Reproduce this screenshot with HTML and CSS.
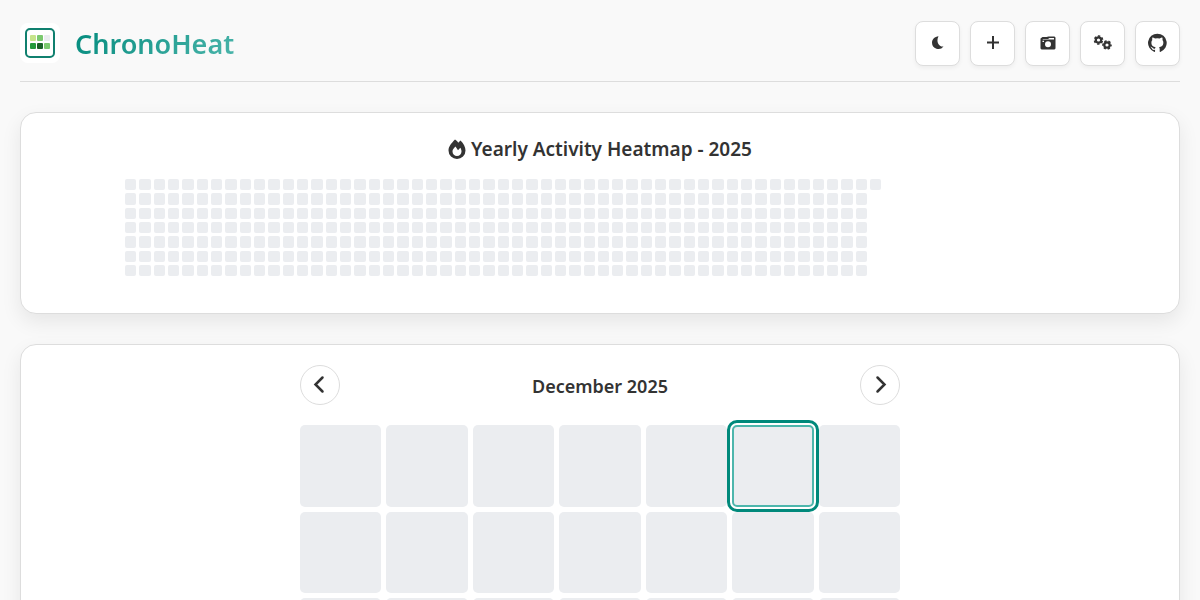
FILE: index.html
```html
<!DOCTYPE html>
<html lang="en">
<head>
  <meta charset="UTF-8">
  <meta name="viewport" content="width=device-width, initial-scale=1.0">
  <title>ChronoHeat</title>
  <link rel="stylesheet" href="styles.css">
</head>
<body>
  <header class="header">
    <div class="brand">
      <svg class="logo" viewBox="0 0 40 40" aria-hidden="true">
        <rect width="40" height="40" rx="8" fill="#fff"/>
        <rect x="6" y="6" width="28" height="28" rx="4" fill="#fff" stroke="#10806f" stroke-width="2"/>
        <rect x="10" y="12" width="6" height="6" rx="1" fill="#c6e48b"/>
        <rect x="17" y="12" width="6" height="6" rx="1" fill="#7bc96f"/>
        <rect x="24" y="12" width="6" height="6" rx="1" fill="#ebedf0"/>
        <rect x="10" y="20" width="6" height="6" rx="1" fill="#239a3b"/>
        <rect x="17" y="20" width="6" height="6" rx="1" fill="#196127"/>
        <rect x="24" y="20" width="6" height="6" rx="1" fill="#7bc96f"/>
      </svg>
      <h1 class="brand-name">ChronoHeat</h1>
    </div>
    <nav class="controls">
      <button class="icon-btn" type="button" aria-label="Toggle theme">
        <svg viewBox="0 0 20 20"><path d="M10.500 3.200C6.800 3.500 4 6.200 4 9.800a6.400 6.400 0 0 0 11.500 3.700C11.500 14.300 7.500 9 10.500 3.200z"/></svg>
      </button>
      <button class="icon-btn" type="button" aria-label="Add activity">
        <svg viewBox="0 0 20 20"><path d="M9 3h2v5.500h5v2h-5V16H9v-5.500H4v-2h5z"/></svg>
      </button>
      <button class="icon-btn" type="button" aria-label="Save snapshot">
        <svg viewBox="0 0 20 20"><path fill-rule="evenodd" d="M2.500 5.500L4.500 4h4L10.500 3.500h6L17.500 4.500v11l-1 1h-13l-1-1zM4.500 6.500h11.500V5h-4.500L10 6H5zM10 8.200a3 3 0 1 0 0 6a3 3 0 0 0 0-6zM4.500 7.800v1.200H6V7.800z"/></svg>
      </button>
      <button class="icon-btn" type="button" aria-label="Settings">
        <svg viewBox="0 0 20 20">
          <g fill="none" stroke="currentColor">
            <circle cx="5.500" cy="7" r="2.700" stroke-width="2.200"/>
            <circle cx="5.500" cy="7" r="4" stroke-width="1.600" stroke-dasharray="2.300 1.889" stroke-dashoffset="-1"/>
            <circle cx="14" cy="12" r="2.700" stroke-width="2.200"/>
            <circle cx="14" cy="12" r="4" stroke-width="1.600" stroke-dasharray="2.300 1.889" stroke-dashoffset="1.100"/>
          </g>
        </svg>
      </button>
      <a class="icon-btn" href="#" aria-label="GitHub">
        <svg viewBox="0 0 16 16"><path d="M7.500.5a7.500 7.500 0 0 0-2.370 14.610c.37.07.51-.16.510-.360v-1.270c-2.090.45-2.530-1.010-2.530-1.010-.34-.87-.83-1.100-.83-1.100-.68-.46.05-.45.05-.45.75.05 1.150.77 1.150.77.67 1.150 1.750.82 2.180.62.07-.48.26-.81.47-1-1.670-.19-3.420-.83-3.420-3.700 0-.82.29-1.490.77-2.010-.08-.19-.33-.95.07-1.980 0 0 .63-.2 2.060.77a7.100 7.100 0 0 1 3.760 0c1.430-.97 2.060-.77 2.060-.77.4 1.030.15 1.790.07 1.980.48.52.77 1.190.77 2.010 0 2.880-1.750 3.510-3.430 3.700.27.23.51.69.51 1.390v2.050c0 .2.130.43.510.360A7.500 7.500 0 0 0 7.500.5z"/></svg>
      </a>
    </nav>
  </header>

  <main>
    <section class="card">
      <h2 class="card-title">
        <svg class="flame" viewBox="0 0 18 20" aria-hidden="true"><path fill-rule="evenodd" d="M7 0.500C8.500 1.500 9.500 2.500 10.200 3.700L12.500 1.500C15.500 4.500 17.500 8 17.500 11.500a8.500 8.500 0 0 1-17 0C.5 7.500 3.500 4 7 .5zM7.500 7.500C5.700 9.200 4.500 10.500 4.500 12.500a4.500 4.500 0 0 0 9 0c0-1.500-.5-2.700-1.200-3.700L10 11.200z"/></svg>
        Yearly Activity Heatmap - 2025
      </h2>
      <div class="heatmap-wrap">
        <div class="heatmap" id="heatmap"></div>
      </div>
    </section>

    <section class="card">
      <div class="calendar">
        <div class="calendar-header">
          <button class="nav-btn" type="button" aria-label="Previous month">
            <svg viewBox="0 0 20 20"><path d="M12.500 2.500L5.500 9.500l7 7"/></svg>
          </button>
          <h2 class="month">December 2025</h2>
          <button class="nav-btn" type="button" aria-label="Next month">
            <svg viewBox="0 0 20 20"><path d="M7.500 2.500l7 7-7 7"/></svg>
          </button>
        </div>
        <div class="days" id="days"></div>
      </div>
    </section>
  </main>

<script>
  const heatmap = document.getElementById('heatmap');
  const days = document.getElementById('days');
  const selectedDay = 6;

  // One cell for each day of the year
  for (let i = 0; i < 365; i++) {
    const cell = document.createElement('div');
    cell.className = 'cell';
    heatmap.appendChild(cell);
  }

  // Days of the current month
  for (let d = 1; d <= 31; d++) {
    const day = document.createElement('button');
    day.type = 'button';
    day.className = d === selectedDay ? 'day selected' : 'day';
    day.setAttribute('aria-label', `December ${d}`);
    days.appendChild(day);
  }
</script>
</body>
</html>
```
FILE: styles.css
```css
:root {
  --accent: #00897b;
  --accent-light: #4db6ac;
  --text: #333;
  --border: #ddd;
  --empty: #ebedf0;
}

* {
  box-sizing: border-box;
}

body {
  margin: 0;
  padding: 20px;
  background: #f9f9f9;
  color: var(--text);
  font-family: 'Noto Sans', 'Open Sans', sans-serif;
}

h1, h2 {
  margin: 0;
}

.header {
  display: flex;
  justify-content: space-between;
  align-items: center;
  height: 62px;
  padding-bottom: 15px;
  margin-bottom: 30px;
  border-bottom: 1px solid var(--border);
}

.brand {
  display: flex;
  align-items: center;
  gap: 15px;
}

.logo {
  width: 40px;
  height: 40px;
}

.brand-name {
  font-size: 27px;
  line-height: 42px;
  padding-top: 2px;
  font-weight: 600;
  background: linear-gradient(135deg, var(--accent), var(--accent-light));
  -webkit-background-clip: text;
  background-clip: text;
  color: transparent;
}

.controls {
  display: flex;
  gap: 10px;
}

.icon-btn {
  display: flex;
  align-items: center;
  justify-content: center;
  width: 45px;
  height: 45px;
  padding: 0;
  background: #fff;
  color: var(--text);
  border: 1px solid var(--border);
  border-radius: 8px;
  box-shadow: 0 2px 4px rgba(0, 0, 0, 0.05);
  cursor: pointer;
}

.icon-btn svg {
  width: 20px;
  height: 20px;
  fill: currentColor;
}

.card {
  padding: 20px;
  margin-bottom: 30px;
  background: #fff;
  border: 1px solid var(--border);
  border-radius: 16px;
  box-shadow: 0 8px 20px rgba(0, 0, 0, 0.08);
}

.card-title {
  display: flex;
  justify-content: center;
  align-items: center;
  gap: 5px;
  margin-bottom: 14px;
  font-size: 19px;
  line-height: 32px;
  font-weight: 600;
}

.flame {
  width: 18px;
  height: 20px;
  fill: currentColor;
}

.heatmap-wrap {
  max-width: 950px;
  margin: 0 auto;
  padding-bottom: 17px;
}

.heatmap {
  display: grid;
  grid-template-rows: repeat(7, auto);
  grid-template-columns: repeat(53, 1fr);
  grid-auto-flow: column;
  gap: 3px;
  max-width: 756px;
}

.cell {
  aspect-ratio: 1;
  background: var(--empty);
  border-radius: 2px;
}

.calendar {
  max-width: 600px;
  margin: 0 auto;
}

.calendar-header {
  display: flex;
  justify-content: space-between;
  align-items: center;
  margin-bottom: 20px;
}

.month {
  padding-top: 2px;
  font-size: 18px;
  line-height: 24px;
  font-weight: 600;
}

.nav-btn {
  display: flex;
  align-items: center;
  justify-content: center;
  width: 40px;
  height: 40px;
  padding: 0;
  background: #fff;
  color: var(--text);
  border: 1px solid var(--border);
  border-radius: 50%;
  cursor: pointer;
}

.nav-btn svg {
  width: 20px;
  height: 20px;
  fill: none;
  stroke: currentColor;
  stroke-width: 2.5;
  stroke-linecap: round;
}

.days {
  display: grid;
  grid-template-columns: repeat(7, 1fr);
  gap: 5px;
}

.day {
  aspect-ratio: 1;
  padding: 0;
  background: var(--empty);
  border: none;
  border-radius: 5px;
  cursor: pointer;
}

.day.selected {
  border: 2px solid var(--accent-light);
  outline: 3px solid var(--accent);
  outline-offset: 2px;
}
```
